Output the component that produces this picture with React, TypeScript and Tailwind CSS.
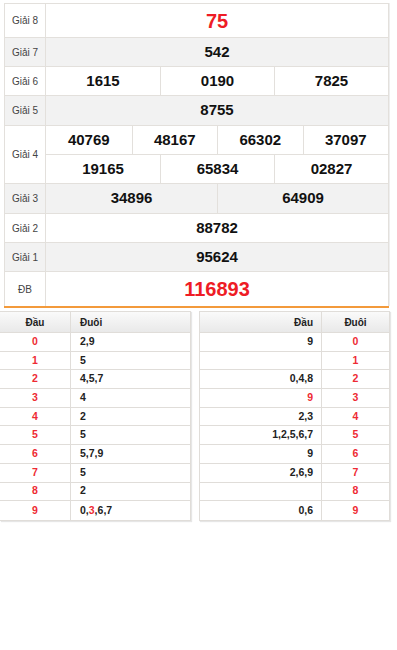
import React from 'react';

type Prize = { label: string; nums: string[][]; big?: boolean; gray?: boolean; h: string };

const prizes: Prize[] = [
  { label: 'Giải 8', nums: [['75']], big: true, h: 'h-[34px]' },
  { label: 'Giải 7', nums: [['542']], gray: true, h: 'h-[29px]' },
  { label: 'Giải 6', nums: [['1615', '0190', '7825']], h: 'h-[29px]' },
  { label: 'Giải 5', nums: [['8755']], gray: true, h: 'h-[30px]' },
  { label: 'Giải 4', nums: [['40769', '48167', '66302', '37097'], ['19165', '65834', '02827']], h: 'h-[58px]' },
  { label: 'Giải 3', nums: [['34896', '64909']], gray: true, h: 'h-[30px]' },
  { label: 'Giải 2', nums: [['88782']], h: 'h-[29px]' },
  { label: 'Giải 1', nums: [['95624']], gray: true, h: 'h-[29px]' },
  { label: 'ĐB', nums: [['116893']], big: true, h: 'h-[34px]' },
];

const gridCols: Record<number, string> = {
  1: 'grid-cols-1',
  2: 'grid-cols-2',
  3: 'grid-cols-3',
  4: 'grid-cols-4',
};

// chữ số đỏ trong bảng loto: [row, index]
const head = ['2,9', '5', '4,5,7', '4', '2', '5', '5,7,9', '5', '2', '0,3,6,7'];
const tail = ['9', '', '0,4,8', '9', '2,3', '1,2,5,6,7', '9', '2,6,9', '', '0,6'];

function Digits({ text, red }: { text: string; red?: string }) {
  const parts = text.split(',');
  return (
    <>
      {parts.map((p, i) => (
        <span key={i}>
          {i > 0 && ','}
          <span className={p === red ? 'text-[#ee2a33]' : ''}>{p}</span>
        </span>
      ))}
    </>
  );
}

function PrizeRow({ p, last }: { p: Prize; last: boolean }) {
  const bg = p.gray ? 'bg-[#f2f2f2]' : 'bg-white';
  return (
    <div className={`flex ${p.h} ${bg} ${last ? '' : 'border-b border-[#e3e0dc]'}`}>
      <div className="w-[41px] shrink-0 border-r border-[#e3e0dc] flex items-center justify-center text-[10px] text-[#444]">
        {p.label}
      </div>
      <div className="flex-1 flex flex-col">
        {p.nums.map((line, i) => (
          <div
            key={i}
            className={`flex-1 grid ${gridCols[line.length]} ${i < p.nums.length - 1 ? 'border-b border-[#e3e0dc]' : ''}`}
          >
            {line.map((n, j) => (
              <div
                key={j}
                className={`flex items-center justify-center font-bold ${j > 0 ? 'border-l border-[#e3e0dc]' : ''} ${
                  p.big ? 'text-[20px] text-[#ee1c25]' : 'text-[15px] text-[#111]'
                }`}
              >
                {n}
              </div>
            ))}
          </div>
        ))}
      </div>
    </div>
  );
}

function LotoTable({ side }: { side: 'left' | 'right' }) {
  const isLeft = side === 'left';
  const rows = isLeft ? head : tail;
  return (
    <div
      className={`w-[191px] border border-[#e0ddd9] shadow-[1px_1px_1px_#e6e6e6] bg-white ${isLeft ? 'border-l-0' : ''}`}
    >
      <div className="flex h-[21px] bg-gradient-to-b from-[#fafafa] to-[#e9e9e9] border-b border-[#e0ddd9] text-[10px] font-bold text-[#222]">
        {isLeft ? (
          <>
            <div className="w-[71px] border-r border-[#e0ddd9] flex items-center justify-center">Đầu</div>
            <div className="flex-1 flex items-center pl-[9px]">Đuôi</div>
          </>
        ) : (
          <>
            <div className="w-[122px] border-r border-[#e0ddd9] flex items-center justify-end pr-[8px]">Đầu</div>
            <div className="flex-1 flex items-center justify-center">Đuôi</div>
          </>
        )}
      </div>
      {rows.map((r, i) => (
        <div
          key={i}
          className={`flex h-[18.7px] text-[10.5px] font-bold text-[#222] ${i < 9 ? 'border-b border-[#e0ddd9]' : ''}`}
        >
          {isLeft ? (
            <>
              <div className="w-[71px] border-r border-[#e0ddd9] flex items-center justify-center text-[#ee2a33]">{i}</div>
              <div className="flex-1 flex items-center pl-[9px]">
                <Digits text={r} red={i === 9 ? '3' : undefined} />
              </div>
            </>
          ) : (
            <>
              <div className={`w-[122px] border-r border-[#e0ddd9] flex items-center justify-end pr-[8px] ${i === 3 ? 'text-[#ee2a33]' : ''}`}>
                {r}
              </div>
              <div className="flex-1 flex items-center justify-center text-[#ee2a33]">{i}</div>
            </>
          )}
        </div>
      ))}
    </div>
  );
}

export default function App() {
  return (
    <div className="w-[397px] h-[650px] bg-white font-['Liberation_Sans',Arial,sans-serif] overflow-hidden">
      <div className="ml-[4px] mt-[3px] w-[385px] border border-[#e3e0dc] border-b-0 shadow-[1px_0_0_#eeeeee]">
        {prizes.map((p, i) => (
          <PrizeRow key={p.label} p={p} last={i === prizes.length - 1} />
        ))}
      </div>
      <div className="ml-[4px] w-[385px] h-[2px] bg-[#f39a3b]" />
      <div className="mt-[3px] flex gap-[8px]">
        <LotoTable side="left" />
        <LotoTable side="right" />
      </div>
    </div>
  );
}
